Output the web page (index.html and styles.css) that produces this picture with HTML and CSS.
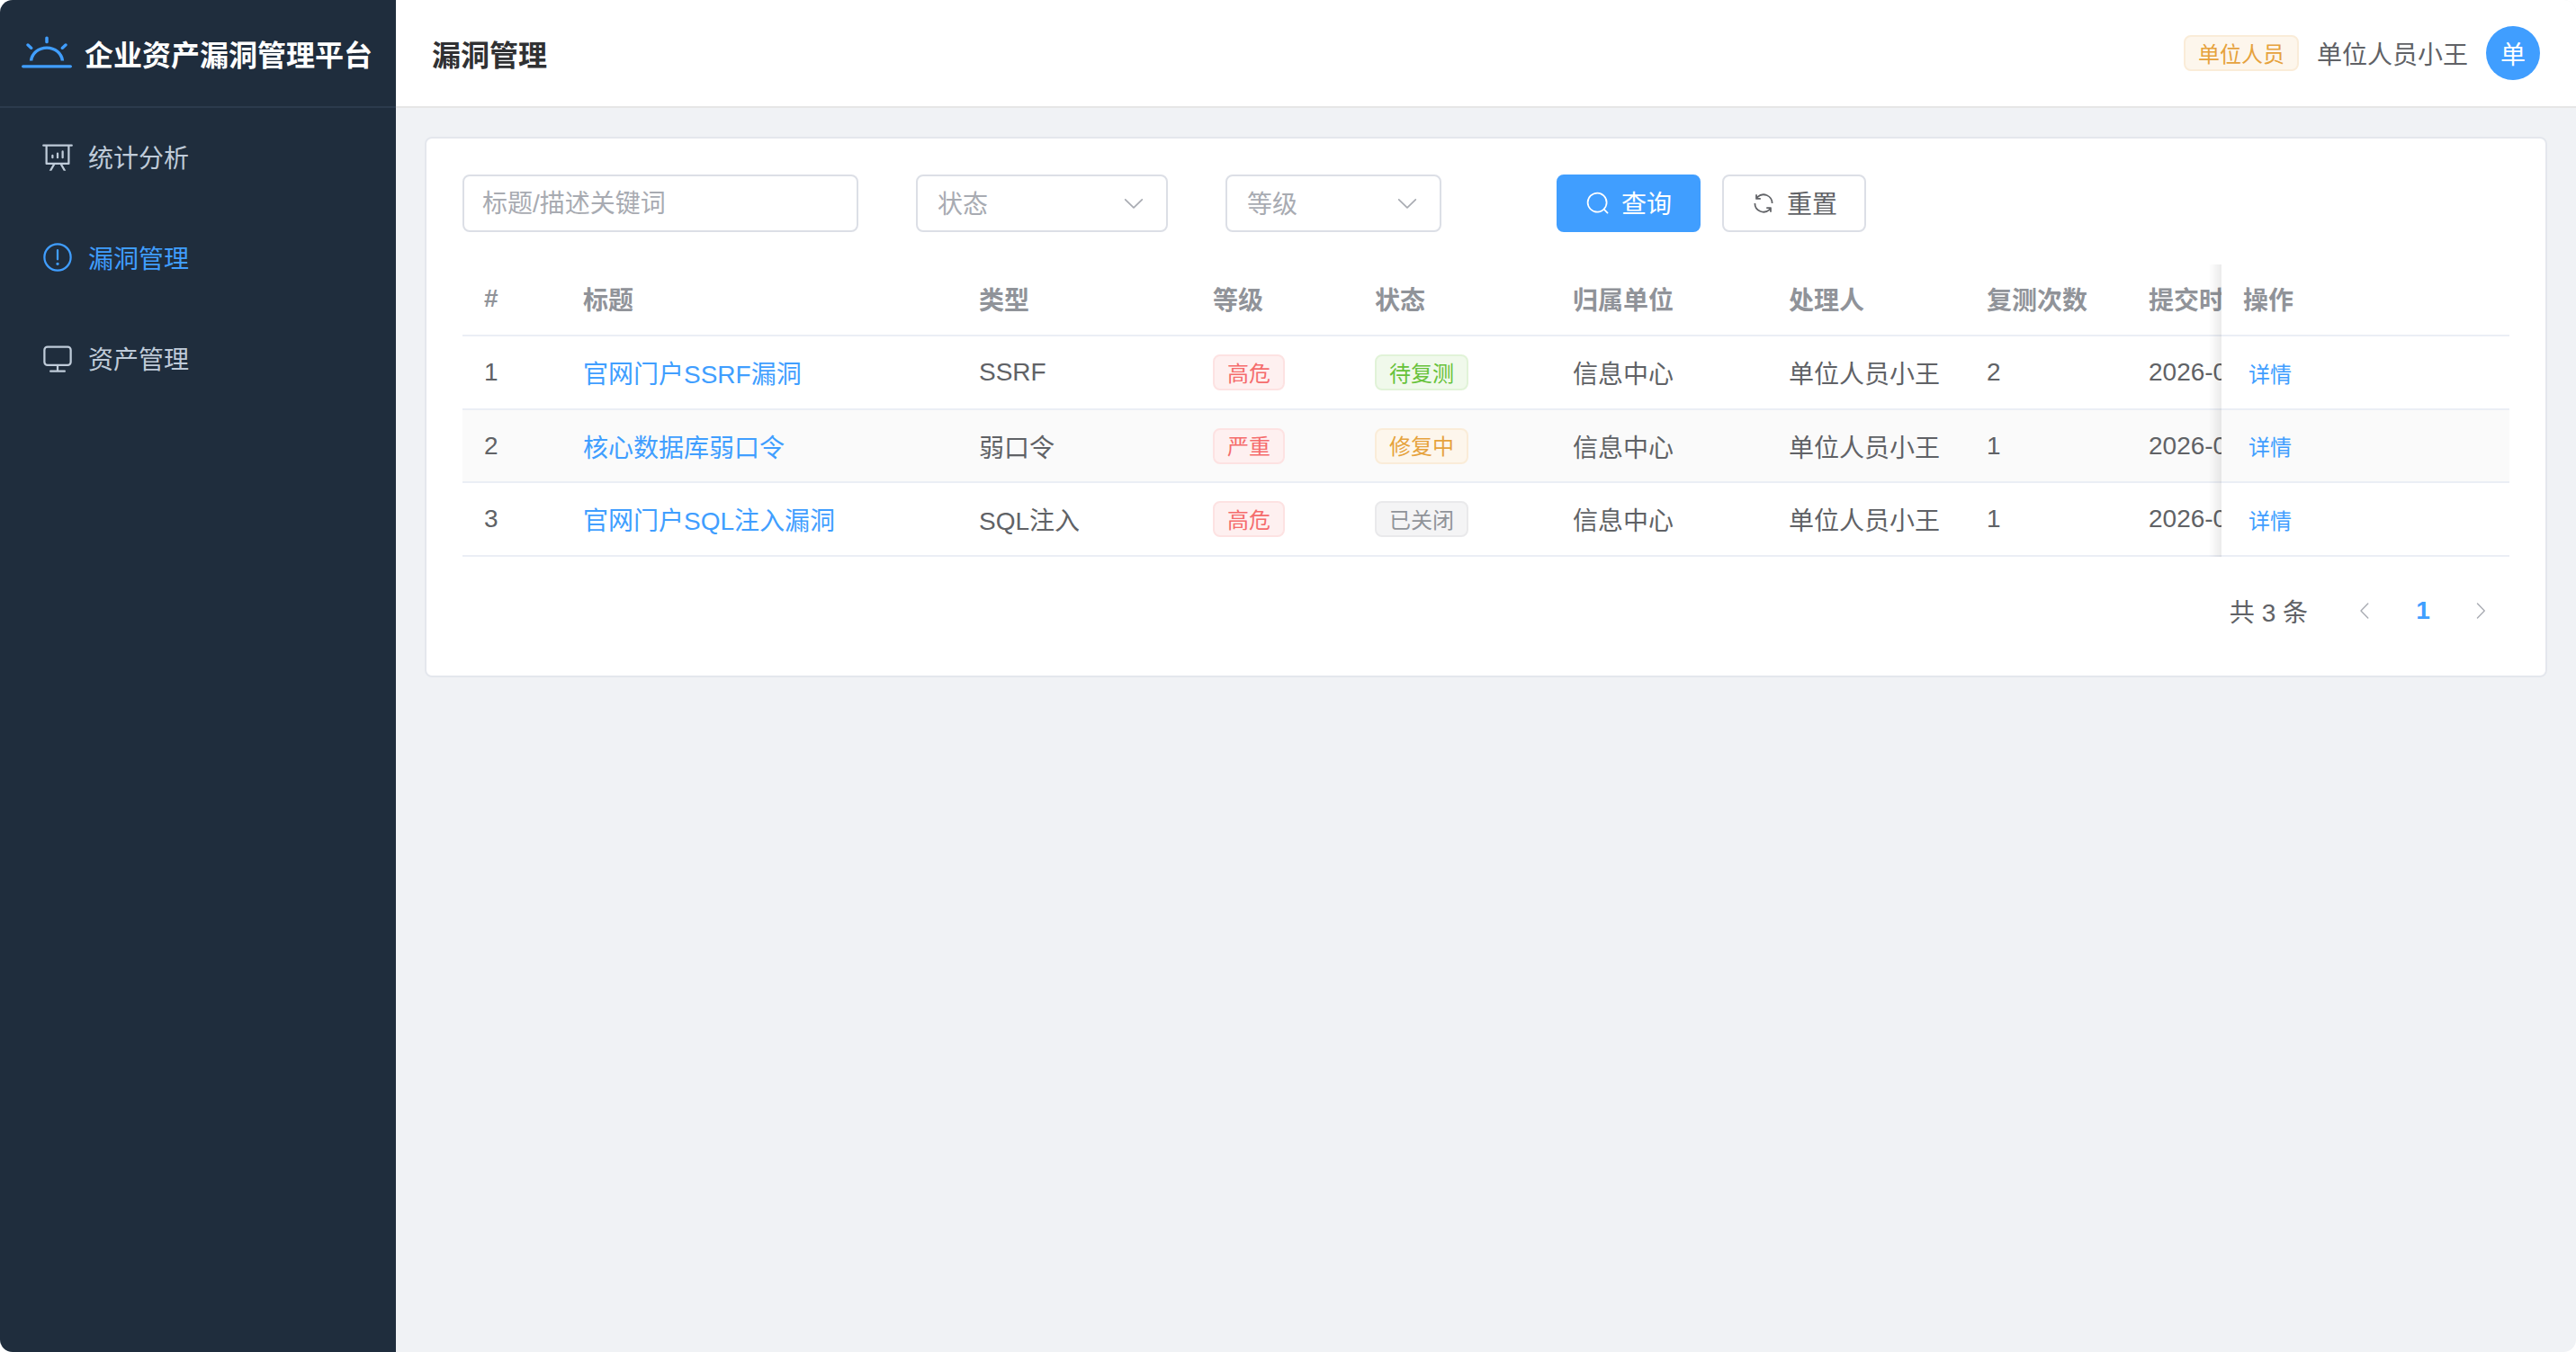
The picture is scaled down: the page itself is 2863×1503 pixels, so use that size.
FILE: index.html
```html
<!DOCTYPE html>
<html lang="zh-CN">
<head>
  <meta charset="UTF-8">
  <meta name="viewport" content="width=device-width, initial-scale=1.0">
  <title>企业资产漏洞管理平台</title>
  <link rel="stylesheet" href="styles.css">
</head>
<body>
  <div class="app">
    <aside class="sidebar">
      <div class="logo">
        <svg class="logo-icon" viewBox="0 0 1024 1024" preserveAspectRatio="none"><path fill="currentColor" d="M32 768h960a32 32 0 1 1 0 64H32a32 32 0 1 1 0-64m129.408-96a352 352 0 0 1 701.184 0h-64.32a288 288 0 0 0-572.544 0zM512 128a32 32 0 0 1 32 32v96a32 32 0 0 1-64 0v-96a32 32 0 0 1 32-32m407.296 168.704a32 32 0 0 1 0 45.248l-67.84 67.84a32 32 0 1 1-45.248-45.248l67.84-67.84a32 32 0 0 1 45.248 0zm-814.592 0a32 32 0 0 1 45.248 0l67.84 67.84a32 32 0 1 1-45.248 45.248l-67.84-67.84a32 32 0 0 1 0-45.248"/></svg>
        <span class="logo-text">企业资产漏洞管理平台</span>
      </div>
      <nav class="menu">
        <a class="menu-item" href="#">
          <svg class="menu-icon" viewBox="0 0 1024 1024"><path fill="currentColor" d="m665.216 768 110.848 192h-73.856L591.36 768H433.024L322.176 960H248.32l110.848-192H160a32 32 0 0 1-32-32V192H64a32 32 0 0 1 0-64h896a32 32 0 1 1 0 64h-64v544a32 32 0 0 1-32 32zM832 192H192v512h640zM352 448a32 32 0 0 1 32 32v64a32 32 0 0 1-64 0v-64a32 32 0 0 1 32-32m160-64a32 32 0 0 1 32 32v128a32 32 0 0 1-64 0V416a32 32 0 0 1 32-32m160-64a32 32 0 0 1 32 32v192a32 32 0 1 1-64 0V352a32 32 0 0 1 32-32"/></svg>
          <span>统计分析</span>
        </a>
        <a class="menu-item active" href="#">
          <svg class="menu-icon" viewBox="0 0 1024 1024"><path fill="currentColor" d="M512 64a448 448 0 1 1 0 896 448 448 0 0 1 0-896m0 832a384 384 0 0 0 0-768 384 384 0 0 0 0 768m48-176a48 48 0 1 1-96 0 48 48 0 0 1 96 0m-48-464a32 32 0 0 1 32 32v288a32 32 0 0 1-64 0V288a32 32 0 0 1 32-32"/></svg>
          <span>漏洞管理</span>
        </a>
        <a class="menu-item" href="#">
          <svg class="menu-icon" viewBox="0 0 1024 1024"><path fill="currentColor" d="M544 768v128h192a32 32 0 1 1 0 64H288a32 32 0 1 1 0-64h192V768H192A128 128 0 0 1 64 640V256a128 128 0 0 1 128-128h640a128 128 0 0 1 128 128v384a128 128 0 0 1-128 128zM192 192a64 64 0 0 0-64 64v384a64 64 0 0 0 64 64h640a64 64 0 0 0 64-64V256a64 64 0 0 0-64-64z"/></svg>
          <span>资产管理</span>
        </a>
      </nav>
    </aside>

    <div class="main">
      <header class="topbar">
        <h1 class="page-title">漏洞管理</h1>
        <div class="user">
          <span class="tag tag-warning">单位人员</span>
          <span class="user-name">单位人员小王</span>
          <span class="avatar">单</span>
        </div>
      </header>

      <div class="content">
        <section class="card">
          <form class="filters">
            <input class="field field-keyword" type="text" placeholder="标题/描述关键词">
            <div class="field field-status">
              <span class="field-label">状态</span>
              <svg class="chevron" viewBox="0 0 1024 1024"><path fill="currentColor" d="M831.872 340.864 512 652.672 192.128 340.864a30.592 30.592 0 0 0-42.752 0 29.12 29.12 0 0 0 0 41.6L489.664 714.24a32 32 0 0 0 44.672 0l340.288-331.712a29.12 29.12 0 0 0 0-41.728 30.592 30.592 0 0 0-42.752 0z"/></svg>
            </div>
            <div class="field field-level">
              <span class="field-label">等级</span>
              <svg class="chevron" viewBox="0 0 1024 1024"><path fill="currentColor" d="M831.872 340.864 512 652.672 192.128 340.864a30.592 30.592 0 0 0-42.752 0 29.12 29.12 0 0 0 0 41.6L489.664 714.24a32 32 0 0 0 44.672 0l340.288-331.712a29.12 29.12 0 0 0 0-41.728 30.592 30.592 0 0 0-42.752 0z"/></svg>
            </div>
            <div class="actions">
              <button class="btn btn-primary" type="button">
                <svg class="btn-icon" viewBox="0 0 1024 1024"><path fill="currentColor" d="m795.904 750.72 124.992 124.928a32 32 0 0 1-45.248 45.248L750.656 795.904a416 416 0 1 1 45.248-45.248zM480 832a352 352 0 1 0 0-704 352 352 0 0 0 0 704"/></svg>
                <span class="btn-label">查询</span>
              </button>
              <button class="btn" type="button">
                <svg class="btn-icon" viewBox="0 0 1024 1024"><path fill="currentColor" d="M771.776 794.88A384 384 0 0 1 128 512h64a320 320 0 0 0 555.712 216.448H654.72a32 32 0 1 1 0-64h149.056a32 32 0 0 1 32 32v148.928a32 32 0 1 1-64 0v-50.56zM276.288 295.616h92.992a32 32 0 0 1 0 64H220.16a32 32 0 0 1-32-32V178.56a32 32 0 0 1 64 0v50.56A384 384 0 0 1 896.128 512h-64a320 320 0 0 0-555.776-216.384z"/></svg>
                <span class="btn-label">重置</span>
              </button>
            </div>
          </form>

          <div class="table-wrap">
            <table class="table">
              <colgroup>
                <col class="col-index">
                <col class="col-title">
                <col class="col-type">
                <col class="col-level">
                <col class="col-status">
                <col class="col-unit">
                <col class="col-owner">
                <col class="col-count">
                <col class="col-time">
                <col class="col-action">
              </colgroup>
              <thead>
                <tr>
                  <th>#</th>
                  <th>标题</th>
                  <th>类型</th>
                  <th>等级</th>
                  <th>状态</th>
                  <th>归属单位</th>
                  <th>处理人</th>
                  <th>复测次数</th>
                  <th>提交时间</th>
                  <th class="fixed">操作</th>
                </tr>
              </thead>
              <tbody>
                <tr>
                  <td>1</td>
                  <td><a class="link" href="#">官网门户SSRF漏洞</a></td>
                  <td>SSRF</td>
                  <td><span class="tag tag-danger">高危</span></td>
                  <td><span class="tag tag-success">待复测</span></td>
                  <td>信息中心</td>
                  <td>单位人员小王</td>
                  <td>2</td>
                  <td>2026-03-18 10:24:36</td>
                  <td class="fixed"><a class="detail" href="#">详情</a></td>
                </tr>
                <tr class="striped">
                  <td>2</td>
                  <td><a class="link" href="#">核心数据库弱口令</a></td>
                  <td>弱口令</td>
                  <td><span class="tag tag-danger">严重</span></td>
                  <td><span class="tag tag-warning">修复中</span></td>
                  <td>信息中心</td>
                  <td>单位人员小王</td>
                  <td>1</td>
                  <td>2026-03-15 16:02:11</td>
                  <td class="fixed"><a class="detail" href="#">详情</a></td>
                </tr>
                <tr>
                  <td>3</td>
                  <td><a class="link" href="#">官网门户SQL注入漏洞</a></td>
                  <td>SQL注入</td>
                  <td><span class="tag tag-danger">高危</span></td>
                  <td><span class="tag tag-info">已关闭</span></td>
                  <td>信息中心</td>
                  <td>单位人员小王</td>
                  <td>1</td>
                  <td>2026-03-10 09:45:50</td>
                  <td class="fixed"><a class="detail" href="#">详情</a></td>
                </tr>
              </tbody>
            </table>
          </div>

          <div class="pagination">
            <span class="total">共 3 条</span>
            <span class="page-btn">
              <svg class="page-arrow" viewBox="0 0 1024 1024"><path fill="currentColor" d="M609.408 149.376 277.76 489.6a32 32 0 0 0 0 44.672l331.648 340.352a29.12 29.12 0 0 0 41.728 0 30.592 30.592 0 0 0 0-42.752L339.264 511.936l311.872-319.872a30.592 30.592 0 0 0 0-42.688 29.12 29.12 0 0 0-41.728 0z"/></svg>
            </span>
            <span class="page-btn current">1</span>
            <span class="page-btn">
              <svg class="page-arrow" viewBox="0 0 1024 1024"><path fill="currentColor" d="M340.864 149.312a30.592 30.592 0 0 0 0 42.752L652.736 512 340.864 831.872a30.592 30.592 0 0 0 0 42.752 29.12 29.12 0 0 0 41.728 0L714.24 534.336a32 32 0 0 0 0-44.672L382.592 149.376a29.12 29.12 0 0 0-41.728 0z"/></svg>
            </span>
          </div>
        </section>
      </div>
    </div>
  </div>
</body>
</html>
```

FILE: styles.css
```css
* {
  box-sizing: border-box;
}

body {
  margin: 0;
  background-color: #ffffff;
  color: #606266;
  font-family: "Liberation Sans", "Noto Sans CJK SC", sans-serif;
  font-size: 28px;
}

.app {
  display: flex;
  height: 100vh;
  border-radius: 14px;
  overflow: hidden;
}

/* sidebar */
.sidebar {
  flex: 0 0 440px;
  background-color: #1f2d3d;
}

.logo {
  display: flex;
  align-items: center;
  gap: 14px;
  height: 120px;
  padding-left: 24px;
  border-bottom: 2px solid #2b3a4d;
}

.logo-icon {
  width: 56px;
  height: 51px;
  color: #409eff;
}

.logo-text {
  color: #ffffff;
  font-size: 32px;
  font-weight: bold;
  white-space: nowrap;
}

.menu-item {
  display: flex;
  align-items: center;
  height: 112px;
  padding-left: 46px;
  padding-bottom: 4px;
  color: #bfcbd9;
  text-decoration: none;
}

.menu-item.active {
  color: #409eff;
}

.menu-icon {
  width: 36px;
  height: 36px;
  margin-right: 16px;
}

/* top bar */
.main {
  flex: 1;
  display: flex;
  flex-direction: column;
  min-width: 0;
  background-color: #f0f2f5;
}

.topbar {
  display: flex;
  align-items: center;
  justify-content: space-between;
  flex: 0 0 120px;
  padding: 0 40px;
  background-color: #ffffff;
  border-bottom: 2px solid #e6e6e6;
}

.page-title {
  margin: 0;
  color: #303133;
  font-size: 32px;
  font-weight: bold;
}

.user {
  display: flex;
  align-items: center;
  gap: 20px;
}

.avatar {
  display: flex;
  align-items: center;
  justify-content: center;
  width: 60px;
  height: 60px;
  border-radius: 50%;
  background-color: #409eff;
  color: #ffffff;
}

/* tags */
.tag {
  display: inline-flex;
  align-items: center;
  justify-content: center;
  height: 40px;
  padding: 0 14px 2px;
  border: 2px solid;
  border-radius: 8px;
  font-size: 24px;
  white-space: nowrap;
}

.tag-danger {
  background-color: #fef0f0;
  border-color: #fde2e2;
  color: #f56c6c;
}

.tag-success {
  background-color: #f0f9eb;
  border-color: #e1f3d8;
  color: #67c23a;
}

.tag-warning {
  background-color: #fdf6ec;
  border-color: #faecd8;
  color: #e6a23c;
}

.tag-info {
  background-color: #f4f4f5;
  border-color: #e9e9eb;
  color: #909399;
}

/* card */
.content {
  padding: 32px;
}

.card {
  padding: 40px;
  background-color: #ffffff;
  border: 2px solid #e4e7ed;
  border-radius: 8px;
}

.filters {
  display: flex;
  gap: 64px;
  margin-bottom: 36px;
}

.field {
  display: flex;
  align-items: center;
  justify-content: space-between;
  height: 64px;
  padding: 0 22px;
  background-color: #ffffff;
  border: 2px solid #dcdfe6;
  border-radius: 8px;
  color: #a8abb2;
  font-family: inherit;
  font-size: 28px;
}

.field::placeholder {
  color: #a8abb2;
}

.field-keyword {
  width: 440px;
  padding-top: 2px;
  padding-left: 20px;
  outline: none;
}

.field-status {
  width: 280px;
}

.field-level {
  width: 240px;
}

.field-label {
  margin-top: -2px;
}

.chevron {
  width: 28px;
  height: 28px;
}

.actions {
  display: flex;
  gap: 24px;
  margin-left: 64px;
}

.btn {
  display: flex;
  align-items: center;
  gap: 12px;
  height: 64px;
  padding: 0 30px;
  background-color: #ffffff;
  border: 2px solid #dcdfe6;
  border-radius: 8px;
  color: #606266;
  font-family: inherit;
  font-size: 28px;
}

.btn-primary {
  background-color: #409eff;
  border-color: #409eff;
  color: #ffffff;
}

.btn-icon {
  width: 28px;
  height: 28px;
}

.btn-label {
  margin-top: -2px;
}

/* table */
.table-wrap {
  overflow: hidden;
}

.table {
  width: 2530px;
  table-layout: fixed;
  border-collapse: separate;
  border-spacing: 0;
}

.col-index { width: 110px; }
.col-title { width: 440px; }
.col-type { width: 260px; }
.col-level { width: 180px; }
.col-status { width: 220px; }
.col-unit { width: 240px; }
.col-owner { width: 220px; }
.col-count { width: 180px; }
.col-time { width: 360px; }
.col-action { width: 320px; }

.table th,
.table td {
  padding: 0 24px;
  border-bottom: 2px solid #ebeef5;
  background-color: #ffffff;
  text-align: left;
  white-space: nowrap;
  overflow: hidden;
}

.table th {
  height: 80px;
  padding-bottom: 2px;
  color: #909399;
  font-weight: bold;
}

.table td {
  height: 82px;
}

.table .striped td {
  height: 81px;
  background-color: #fafafa;
}

.table .fixed {
  position: sticky;
  right: 0;
  overflow: visible;
}

/* shadow along the fixed column */
.table .fixed::before {
  content: "";
  position: absolute;
  top: 0;
  bottom: -2px;
  left: -14px;
  width: 14px;
  background: linear-gradient(to left, rgba(0, 0, 0, 0.08), rgba(0, 0, 0, 0));
}

.link,
.detail {
  color: #409eff;
  text-decoration: none;
}

.detail {
  margin-left: 6px;
  font-size: 24px;
}

/* pagination */
.pagination {
  display: flex;
  align-items: center;
  justify-content: flex-end;
  margin-top: 28px;
}

.total {
  margin-right: 32px;
}

.page-btn {
  display: flex;
  align-items: center;
  justify-content: center;
  width: 64px;
  height: 64px;
  color: #a8abb2;
}

.page-btn.current {
  color: #409eff;
  font-weight: bold;
}

.page-arrow {
  width: 24px;
  height: 24px;
}
```
